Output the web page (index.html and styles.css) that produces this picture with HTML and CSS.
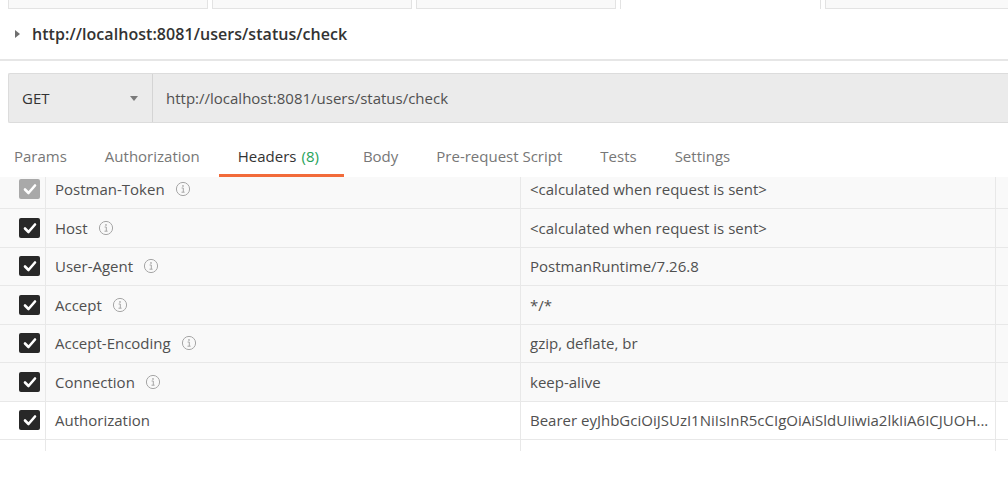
FILE: index.html
```html
<!DOCTYPE html>
<html>
<head>
<meta charset="utf-8">
<link rel="stylesheet" href="styles.css">
</head>
<body>
<div class="wintabs">
  <div class="wtab"></div>
  <div class="wtab"></div>
  <div class="wtab"></div>
  <div class="wtab active"></div>
  <div class="wtab wtab-last"></div>
</div>
<div class="title-row">
  <span class="caret"></span>
  <span class="title">http://localhost:8081/users/status/check</span>
</div>
<div class="urlbar">
  <div class="method">
    <span class="method-text">GET</span>
    <span class="dd"></span>
  </div>
  <div class="url">http://localhost:8081/users/status/check</div>
</div>
<div class="reqtabs">
  <div class="rtab first">Params</div>
  <div class="rtab">Authorization</div>
  <div class="rtab active">Headers <span class="count">(8)</span></div>
  <div class="rtab">Body</div>
  <div class="rtab">Pre-request Script</div>
  <div class="rtab">Tests</div>
  <div class="rtab">Settings</div>
</div>
<div class="table-wrap">
  <div class="table">
    <div class="row auto">
      <div class="c-check"><span class="cb disabled"><svg viewBox="0 0 20 20" width="20" height="20"><path d="M5 10.5 L8.5 14 L15 6.5" fill="none" stroke="#fff" stroke-width="2.6" stroke-linecap="round" stroke-linejoin="round"/></svg></span></div>
      <div class="c-key">Postman-Token <svg class="info" viewBox="0 0 16 16" width="16" height="16"><circle cx="8" cy="8" r="6.6" fill="none" stroke="#a6a6a6" stroke-width="1"/><circle cx="8" cy="4.9" r="0.85" fill="#a6a6a6"/><path d="M6.6 7 H8.3 V11 M6.5 11.2 H9.6" fill="none" stroke="#a6a6a6" stroke-width="1"/></svg></div>
      <div class="c-val">&lt;calculated when request is sent&gt;</div>
      <div class="c-extra"></div>
    </div>
    <div class="row auto">
      <div class="c-check"><span class="cb"><svg viewBox="0 0 20 20" width="20" height="20"><path d="M5 10.5 L8.5 14 L15 6.5" fill="none" stroke="#fff" stroke-width="2.6" stroke-linecap="round" stroke-linejoin="round"/></svg></span></div>
      <div class="c-key">Host <svg class="info" viewBox="0 0 16 16" width="16" height="16"><circle cx="8" cy="8" r="6.6" fill="none" stroke="#a6a6a6" stroke-width="1"/><circle cx="8" cy="4.9" r="0.85" fill="#a6a6a6"/><path d="M6.6 7 H8.3 V11 M6.5 11.2 H9.6" fill="none" stroke="#a6a6a6" stroke-width="1"/></svg></div>
      <div class="c-val">&lt;calculated when request is sent&gt;</div>
      <div class="c-extra"></div>
    </div>
    <div class="row auto">
      <div class="c-check"><span class="cb"><svg viewBox="0 0 20 20" width="20" height="20"><path d="M5 10.5 L8.5 14 L15 6.5" fill="none" stroke="#fff" stroke-width="2.6" stroke-linecap="round" stroke-linejoin="round"/></svg></span></div>
      <div class="c-key">User-Agent <svg class="info" viewBox="0 0 16 16" width="16" height="16"><circle cx="8" cy="8" r="6.6" fill="none" stroke="#a6a6a6" stroke-width="1"/><circle cx="8" cy="4.9" r="0.85" fill="#a6a6a6"/><path d="M6.6 7 H8.3 V11 M6.5 11.2 H9.6" fill="none" stroke="#a6a6a6" stroke-width="1"/></svg></div>
      <div class="c-val">PostmanRuntime/7.26.8</div>
      <div class="c-extra"></div>
    </div>
    <div class="row auto">
      <div class="c-check"><span class="cb"><svg viewBox="0 0 20 20" width="20" height="20"><path d="M5 10.5 L8.5 14 L15 6.5" fill="none" stroke="#fff" stroke-width="2.6" stroke-linecap="round" stroke-linejoin="round"/></svg></span></div>
      <div class="c-key">Accept <svg class="info" viewBox="0 0 16 16" width="16" height="16"><circle cx="8" cy="8" r="6.6" fill="none" stroke="#a6a6a6" stroke-width="1"/><circle cx="8" cy="4.9" r="0.85" fill="#a6a6a6"/><path d="M6.6 7 H8.3 V11 M6.5 11.2 H9.6" fill="none" stroke="#a6a6a6" stroke-width="1"/></svg></div>
      <div class="c-val">*/*</div>
      <div class="c-extra"></div>
    </div>
    <div class="row auto">
      <div class="c-check"><span class="cb"><svg viewBox="0 0 20 20" width="20" height="20"><path d="M5 10.5 L8.5 14 L15 6.5" fill="none" stroke="#fff" stroke-width="2.6" stroke-linecap="round" stroke-linejoin="round"/></svg></span></div>
      <div class="c-key">Accept-Encoding <svg class="info" viewBox="0 0 16 16" width="16" height="16"><circle cx="8" cy="8" r="6.6" fill="none" stroke="#a6a6a6" stroke-width="1"/><circle cx="8" cy="4.9" r="0.85" fill="#a6a6a6"/><path d="M6.6 7 H8.3 V11 M6.5 11.2 H9.6" fill="none" stroke="#a6a6a6" stroke-width="1"/></svg></div>
      <div class="c-val">gzip, deflate, br</div>
      <div class="c-extra"></div>
    </div>
    <div class="row auto">
      <div class="c-check"><span class="cb"><svg viewBox="0 0 20 20" width="20" height="20"><path d="M5 10.5 L8.5 14 L15 6.5" fill="none" stroke="#fff" stroke-width="2.6" stroke-linecap="round" stroke-linejoin="round"/></svg></span></div>
      <div class="c-key">Connection <svg class="info" viewBox="0 0 16 16" width="16" height="16"><circle cx="8" cy="8" r="6.6" fill="none" stroke="#a6a6a6" stroke-width="1"/><circle cx="8" cy="4.9" r="0.85" fill="#a6a6a6"/><path d="M6.6 7 H8.3 V11 M6.5 11.2 H9.6" fill="none" stroke="#a6a6a6" stroke-width="1"/></svg></div>
      <div class="c-val">keep-alive</div>
      <div class="c-extra"></div>
    </div>
    <div class="row">
      <div class="c-check"><span class="cb"><svg viewBox="0 0 20 20" width="20" height="20"><path d="M5 10.5 L8.5 14 L15 6.5" fill="none" stroke="#fff" stroke-width="2.6" stroke-linecap="round" stroke-linejoin="round"/></svg></span></div>
      <div class="c-key">Authorization</div>
      <div class="c-val">Bearer eyJhbGciOiJSUzI1NiIsInR5cCIgOiAiSldUIiwia2lkIiA6ICJUOH...</div>
      <div class="c-extra"></div>
    </div>
    <div class="row last">
      <div class="c-check"></div>
      <div class="c-key"></div>
      <div class="c-val"></div>
      <div class="c-extra"></div>
    </div>
  </div>
</div>
</body>
</html>
```

FILE: styles.css
```css
* { box-sizing: border-box; }
html, body { margin: 0; padding: 0; background: #fff; }
body {
  font-family: "Open Sans", "Noto Sans", sans-serif;
  color: #505050;
  width: 1008px;
  height: 482px;
  overflow: hidden;
}

/* window tabs strip */
.wintabs {
  display: flex;
  gap: 4px;
  height: 9px;
  padding-left: 8px;
}
.wtab {
  flex: 0 0 200px;
  height: 9px;
  background: #f9f9f9;
  border: 1px solid #e3e3e3;
  border-top: none;
}
.wtab.active {
  background: #fff;
  border-bottom: none;
  flex-basis: 201px;
}
.wtab-last { flex: 1 0 150px; border-right: none; }

/* title row */
.title-row {
  height: 52px;
  display: flex;
  align-items: center;
  padding-left: 15px;
  border-bottom: 2px solid #e6e6e6;
  padding-bottom: 1px;
}
.caret {
  width: 0; height: 0;
  border-top: 4px solid transparent;
  border-bottom: 4px solid transparent;
  border-left: 5px solid #6f6f6f;
  margin-right: 12px;
}
.title {
  font-size: 16px;
  font-weight: 600;
  color: #333;
  letter-spacing: 0.05px;
}

/* url bar */
.urlbar {
  margin: 12px 0 0 8px;
  height: 50px;
  display: flex;
  background: #ebebeb;
  border: 1px solid #dcdcdc;
  border-right: none;
  border-radius: 2px 0 0 2px;
}
.method {
  flex: 0 0 144px;
  display: flex;
  align-items: center;
  justify-content: space-between;
  padding: 0 14px 0 13px;
  border-right: 1px solid #d4d4d4;
}
.method-text {
  font-size: 15px;
  font-weight: 500;
  color: #333;
}
.dd {
  width: 0; height: 0;
  border-left: 4.5px solid transparent;
  border-right: 4.5px solid transparent;
  border-top: 5px solid #7a7a7a;
}
.url {
  display: flex;
  align-items: center;
  padding-left: 13px;
  font-size: 15px;
  color: #505050;
}

/* request tabs */
.reqtabs {
  display: flex;
  height: 54px;
  align-items: stretch;
}
.rtab {
  display: flex;
  align-items: center;
  padding: 15px 19px 0;
  font-size: 15px;
  color: #777;
  border-bottom: 3px solid transparent;
  white-space: nowrap;
}
.rtab.first { padding-left: 14px; }
.rtab.active {
  color: #333;
  border-bottom-color: #f26b3a;
  padding-right: 25px;
}
.count { color: #26a35a; margin-left: 5px; }

/* table */
.table-wrap {
  height: 274px;
  overflow: hidden;
}
.table {
  margin-top: -6.5px;
}
.row {
  display: flex;
  height: 38.5px;
  border-bottom: 1px solid #e8e8e8;
  background: #fff;
}
.row.auto { background: #f9f9f9; }
.row > div {
  display: flex;
  align-items: center;
  font-size: 15px;
  color: #505050;
  white-space: nowrap;
}
.c-check {
  flex: 0 0 46px;
  border-right: 1px solid #e8e8e8;
  padding-left: 19px;
}
.c-key {
  flex: 0 0 475px;
  border-right: 1px solid #e8e8e8;
  padding-left: 9px;
}
.c-val {
  flex: 0 0 475px;
  border-right: 1px solid #e8e8e8;
  padding-left: 9px;
  padding-right: 4px;
}
.c-extra { flex: 1 1 auto; }
.cb {
  width: 21px;
  height: 20px;
  border-radius: 2px;
  background: #282828;
  display: flex;
  align-items: center;
  justify-content: center;
}
.cb.disabled { background: #a9a9a9; }
.info {
  margin-left: 10px;
  flex: 0 0 16px;
}
```
